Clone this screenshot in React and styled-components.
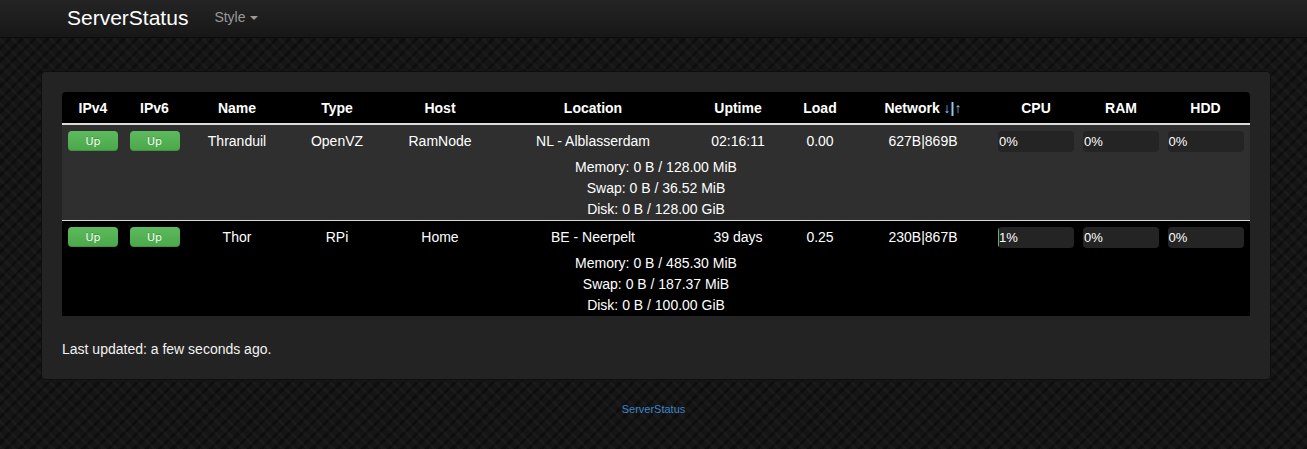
import styled, { createGlobalStyle } from "styled-components"

const GlobalStyle = createGlobalStyle`
  html, body {
    margin: 0;
    padding: 0;
  }
  body {
    min-height: 449px;
    background-color: #151515;
    background-image:
      repeating-linear-gradient(45deg, rgba(255,255,255,0.022) 0 3px, transparent 3px 9px),
      repeating-linear-gradient(-45deg, rgba(0,0,0,0.35) 0 3px, transparent 3px 9px);
    font-family: "Liberation Sans", Arial, sans-serif;
    font-size: 14px;
    color: #fff;
  }
`

const columns = "62px 61px 104px 96px 110px 196px 94px 70px 136px 90px 80px 89px"

const NavBar = styled.div`
  height: 37px;
  background: linear-gradient(to bottom, #242424, #171717);
  border-bottom: 1px solid #0b0b0b;
  display: flex;
  align-items: center;
  padding-left: 67px;
`

const Brand = styled.a`
  font-size: 21px;
  color: #fff;
  text-decoration: none;
  margin-top: -2px;
`

const NavMenu = styled.a`
  margin-left: 26px;
  font-size: 14px;
  color: #999;
  display: flex;
  align-items: center;
  gap: 4px;
  margin-top: -3px;
`

const Caret = styled.span`
  width: 0;
  height: 0;
  border-left: 4px solid transparent;
  border-right: 4px solid transparent;
  border-top: 4px solid #999;
  margin-top: 1px;
`

const Panel = styled.div`
  margin: 33px 36px 0 41px;
  padding: 20px;
  background: #232323;
  border: 1px solid #0e0e0e;
  border-radius: 4px;
`

const Table = styled.div`
  width: 1188px;
`

const HeadRow = styled.div`
  display: grid;
  grid-template-columns: ${columns};
  height: 31px;
  align-items: center;
  background: #000;
  border-radius: 4px 4px 0 0;
  border-bottom: 2px solid #dcdcdc;
`

const HeadCell = styled.div`
  text-align: center;
  font-weight: bold;
  white-space: nowrap;
`

const Arrows = styled.span`
  color: #8fcaf2;
`

const Row = styled.div`
  background: ${({ $shade }) => ($shade ? "#2f2f2f" : "#000")};
  border-top: ${({ $first }) => ($first ? "none" : "1px solid #d8d8d8")};
`

const MainLine = styled.div`
  display: grid;
  grid-template-columns: ${columns};
  height: 32px;
  align-items: center;
`

const Cell = styled.div`
  display: flex;
  justify-content: center;
  white-space: nowrap;
  line-height: 20px;
`

const Pill = styled.div`
  width: 50px;
  height: 20px;
  border-radius: 4px;
  background: linear-gradient(to bottom, #5dbb5d, #4aa84a);
  color: #f2fff2;
  font-family: "DejaVu Sans", Verdana, sans-serif;
  font-size: 11px;
  line-height: 21px;
  text-align: center;
  text-shadow: 0 -1px 0 rgba(0, 0, 0, 0.25);
  box-shadow: inset 0 -1px 0 rgba(0, 0, 0, 0.12);
`

const Bar = styled.div`
  position: relative;
  width: 76px;
  height: 21px;
  border-radius: 4px;
  overflow: hidden;
  background: #242424;
`

const BarFill = styled.div`
  position: absolute;
  left: 0;
  top: 0;
  bottom: 0;
  background: #5cb85c;
`

const BarLabel = styled.span`
  position: relative;
  display: block;
  padding-left: 1px;
  font-size: 13px;
  line-height: 21px;
  color: #fff;
`

const Details = styled.div`
  text-align: center;
  line-height: 21px;
  color: #fff;
`

const Updated = styled.p`
  margin: 23px 0 0;
  line-height: 20px;
  color: #f2f2f2;
`

const Footer = styled.div`
  margin-top: 21px;
  text-align: center;
  font-size: 11px;
  line-height: 16px;
`

const FooterLink = styled.a`
  color: #3d85c6;
  text-decoration: none;
`

const servers = [
  {
    name: "Thranduil",
    type: "OpenVZ",
    host: "RamNode",
    location: "NL - Alblasserdam",
    uptime: "02:16:11",
    load: "0.00",
    network: "627B|869B",
    cpu: 0,
    ram: 0,
    hdd: 0,
    memory: "0 B / 128.00 MiB",
    swap: "0 B / 36.52 MiB",
    disk: "0 B / 128.00 GiB",
  },
  {
    name: "Thor",
    type: "RPi",
    host: "Home",
    location: "BE - Neerpelt",
    uptime: "39 days",
    load: "0.25",
    network: "230B|867B",
    cpu: 1,
    ram: 0,
    hdd: 0,
    memory: "0 B / 485.30 MiB",
    swap: "0 B / 187.37 MiB",
    disk: "0 B / 100.00 GiB",
  },
]

const Usage = ({ value }) => (
  <Bar>
    {value > 0 && <BarFill style={{ width: `max(1px, ${value}%)` }} />}
    <BarLabel>{value}%</BarLabel>
  </Bar>
)

const App = () => {
  return (
    <>
      <GlobalStyle />
      <NavBar>
        <Brand>ServerStatus</Brand>
        <NavMenu>
          Style <Caret />
        </NavMenu>
      </NavBar>
      <Panel>
        <Table>
          <HeadRow>
            <HeadCell>IPv4</HeadCell>
            <HeadCell>IPv6</HeadCell>
            <HeadCell>Name</HeadCell>
            <HeadCell>Type</HeadCell>
            <HeadCell>Host</HeadCell>
            <HeadCell>Location</HeadCell>
            <HeadCell>Uptime</HeadCell>
            <HeadCell>Load</HeadCell>
            <HeadCell>
              Network <Arrows>↓|↑</Arrows>
            </HeadCell>
            <HeadCell>CPU</HeadCell>
            <HeadCell>RAM</HeadCell>
            <HeadCell>HDD</HeadCell>
          </HeadRow>
          {servers.map((s, i) => (
            <Row key={s.name} $shade={i % 2 === 0} $first={i === 0}>
              <MainLine>
                <Cell><Pill>Up</Pill></Cell>
                <Cell><Pill>Up</Pill></Cell>
                <Cell>{s.name}</Cell>
                <Cell>{s.type}</Cell>
                <Cell>{s.host}</Cell>
                <Cell>{s.location}</Cell>
                <Cell>{s.uptime}</Cell>
                <Cell>{s.load}</Cell>
                <Cell>{s.network}</Cell>
                <Cell><Usage value={s.cpu} /></Cell>
                <Cell><Usage value={s.ram} /></Cell>
                <Cell><Usage value={s.hdd} /></Cell>
              </MainLine>
              <Details>
                <div>Memory: {s.memory}</div>
                <div>Swap: {s.swap}</div>
                <div>Disk: {s.disk}</div>
              </Details>
            </Row>
          ))}
        </Table>
        <Updated>Last updated: a few seconds ago.</Updated>
      </Panel>
      <Footer>
        <FooterLink>ServerStatus</FooterLink>
      </Footer>
    </>
  )
}

export default App
